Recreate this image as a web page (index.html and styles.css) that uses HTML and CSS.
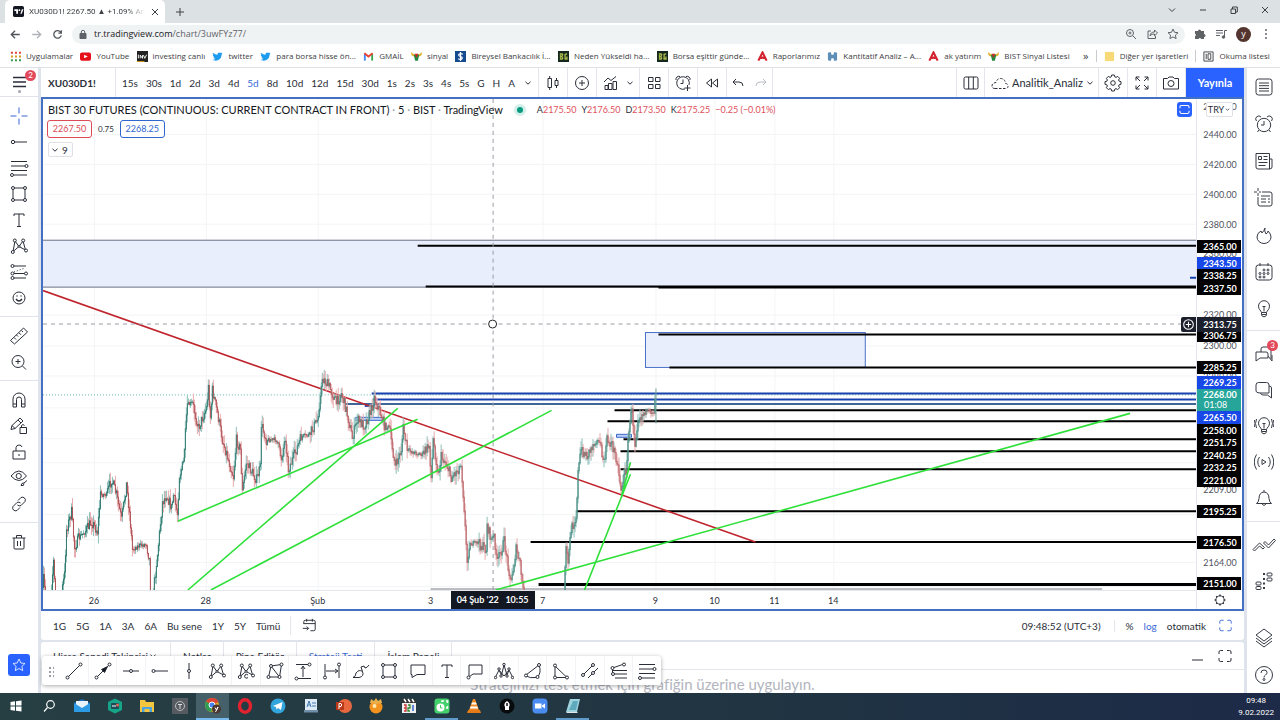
FILE: index.html
```html
<!DOCTYPE html>
<html lang="tr">
<head>
<meta charset="utf-8">
<title>XU030D1! 2267.50 ▲ +1.09%</title>
<link rel="stylesheet" href="styles.css">
</head>
<body>
<svg class="sprite" aria-hidden="true">
  <symbol id="back" viewBox="0 0 20 20"><path d="M15 10H5M9.500 5.500L5 10l4.500 4.500"/></symbol>
  <symbol id="fwd" viewBox="0 0 20 20"><path d="M5 10h10M10.500 5.500L15 10l-4.500 4.500"/></symbol>
  <symbol id="reload" viewBox="0 0 20 20"><path d="M14 7.500A4.500 4.500 0 1 0 14.500 11M14.500 5v3.500H11"/></symbol>
  <symbol id="chev" viewBox="0 0 10 10"><path d="M2.500 3.800L5 6.200l2.500-2.400"/></symbol>
  <symbol id="bird" viewBox="0 0 12 12"><path d="M1 2c1.500 1.500 3 2 5 2.200C6 1.500 8.500 1 9.700 2.200L11.300 2 10.500 4C10.300 8 7.500 10.500 4 10.500 2.700 10.500 1.500 10 .7 9.500 2 9.500 3 9 3.700 8.500 2.300 8.200 1.800 7.500 1.700 6.800L2.500 6.700C1.200 6 .9 5 1 4.200l.7.200C.7 3.500.7 2.700 1 2z" fill="#1d9bf0" stroke="none"/></symbol>
  <symbol id="bull" viewBox="0 0 12 12"><g stroke="none"><path d="M0 1l3 2.500h6L12 1l-.5 3.500L9 6H3L.5 4.500z" fill="#e0b12c"/><path d="M3 4h6L7.500 10.500h-3z" fill="#1f8a3d"/><path d="M4 3h4L6.500 7h-1z" fill="#c22f2f"/></g></symbol>
  <symbol id="bg" viewBox="0 0 12 12"><g stroke="none"><path d="M0 0h12v12H0z" fill="#14281d"/><path d="M2 2.500h3l1 1.500-1 2 1 2-1 1.500H2zM7 3l3-.5v1.700H8.500v3.500H9V6h1.500v3.500H7z" fill="#a9b84a"/><path d="M3 4h1.300v1H3zM3 7h1.300v1H3z" fill="#14281d"/></g></symbol>
  <symbol id="aLogo" viewBox="0 0 12 12"><path d="M1.500 10.500L6 1.500l4.500 9M3.500 8Q6 6.300 8.500 8" stroke="#d3222d" stroke-width="2.300"/></symbol>
  <symbol id="pattern" viewBox="0 0 20 20"><path d="M4 15.500L6 5l4 5.500L14 5l2.500 9M4 15.500l6-5 6.500 3.500"/><g fill="#fff"><circle cx="3.800" cy="16" r="1.500"/><circle cx="5.800" cy="4.500" r="1.500"/><circle cx="14.200" cy="4.500" r="1.500"/><circle cx="17" cy="14.500" r="1.500"/><circle cx="10" cy="10.300" r="1"/></g></symbol>
  <symbol id="rect" viewBox="0 0 20 20"><path d="M4 4h12v12H4z"/><g fill="#fff"><circle cx="4" cy="4" r="1.500"/><circle cx="16" cy="4" r="1.500"/><circle cx="4" cy="16" r="1.500"/><circle cx="16" cy="16" r="1.500"/></g></symbol>
  <symbol id="text" viewBox="0 0 20 20"><path d="M5 6V4h10v2M10 4v12.500M8 16.500h4"/></symbol>
  <symbol id="frame" viewBox="0 0 20 20"><path d="M4 8V6q0-1.500 1.500-1.500H8M12 4.500h2.500Q16 4.500 16 6v2M16 12v2q0 1.500-1.500 1.500H12M8 15.500H5.500Q4 15.500 4 14v-2"/></symbol>
  <symbol id="gear" viewBox="0 0 20 20"><path d="M8.700 3h2.600l.5 1.900 1.200.5 1.700-1 1.900 1.900-1 1.700.5 1.200 1.900.5v2.600l-1.900.5-.5 1.200 1 1.700-1.900 1.900-1.700-1-1.200.5-.5 1.900H8.700l-.5-1.900-1.200-.5-1.700 1-1.900-1.900 1-1.700-.5-1.200-1.900-.5V9.700l1.900-.5.5-1.200-1-1.700 1.900-1.900 1.700 1 1.200-.5z" transform="translate(0 -1)"/><circle cx="10" cy="10" r="2.300"/></symbol>
  <symbol id="bulb" viewBox="0 0 20 20"><path d="M7.500 13.500C7 11.500 4.500 10.500 4.500 7.200a5.500 5.500 0 0 1 11 0c0 3.300-2.500 4.300-3 6.300zM7.500 13.500v2.300q.5 2 2.500 2t2.500-2v-2.300M8 15.500h4M8.500 7.500h3M10 7.500v5"/></symbol>
  <symbol id="alarm" viewBox="0 0 20 20"><circle cx="10" cy="11" r="6.700"/><path d="M10 7v4H7M2.500 7A3 3 0 0 1 7 3M17.500 7A3 3 0 0 0 13 3M5 16l-1.500 2M15 16l1.500 2"/></symbol>
</svg>

<header class="browser">
  <div class="tabstrip">
    <div class="tab">
      <svg class="fav" viewBox="0 0 12 12"><rect width="12" height="12" rx="2" fill="#131722"/><path d="M1.500 3.500h4v5h-2v-3h-2zM8 8.500l1.700-5h1.800l-2 5z" fill="#fff"/><circle cx="7" cy="4.500" r="1" fill="#fff"/></svg>
      <span class="tab-title">XU030D1! 2267.50 ▲ +1.09% An</span>
      <button class="x" aria-label="Sekmeyi kapat"><svg viewBox="0 0 10 10"><path d="M2 2l6 6M8 2L2 8"/></svg></button>
    </div>
    <button class="newtab" aria-label="Yeni sekme"><svg viewBox="0 0 10 10"><path d="M5 1v8M1 5h8"/></svg></button>
    <div class="win">
      <button aria-label="Sekme ara"><svg viewBox="0 0 10 10"><path d="M2 3.500l3 3 3-3"/></svg></button>
      <button aria-label="Küçült"><svg viewBox="0 0 10 10"><path d="M2 5h6"/></svg></button>
      <button aria-label="Önceki boyut"><svg viewBox="0 0 10 10"><path d="M2 4h4.500v4.500H2zM3.500 4V2h4.800v5H6.500"/></svg></button>
      <button aria-label="Kapat"><svg viewBox="0 0 10 10"><path d="M2 2l6 6M8 2L2 8"/></svg></button>
    </div>
  </div>
  <div class="navbar">
    <button aria-label="Geri"><svg><use href="#back"/></svg></button>
    <button class="dim" aria-label="İleri"><svg><use href="#fwd"/></svg></button>
    <button aria-label="Yenile"><svg><use href="#reload"/></svg></button>
    <div class="omni">
      <svg class="lock" viewBox="0 0 10 10"><path d="M2 4.500h6v5H2z" fill="#5f6368"/><path d="M3.300 4.500V3a1.700 1.700 0 0 1 3.400 0v1.500"/></svg>
      <span class="url"><b>tr.tradingview.com</b><span>/chart/3uwFYz77/</span></span>
      <svg viewBox="0 0 12 12"><circle cx="5" cy="5" r="3.500"/><path d="M7.700 7.700L11 11M3.500 5h3M5 3.500v3"/></svg>
      <svg viewBox="0 0 12 12"><path d="M5 3H2v7.500h7.500V8M4 8c.3-3 2-4 4.500-4V2l3 3-3 2.800V6C6.500 6 5 6.500 4 8z"/></svg>
      <svg viewBox="0 0 12 12"><path d="M6 1l1.500 3.300 3.500.4-2.600 2.400.7 3.500L6 8.900l-3.100 1.700.7-3.500L1 4.700l3.500-.4z"/></svg>
    </div>
    <div class="navend">
      <svg viewBox="0 0 12 12"><path d="M1 3h3a1.500 1.500 0 1 1 3 0h3v3a1.500 1.500 0 1 1 0 3v2H7.200a1.400 1.400 0 0 0-2.600 0H1V8.300a1.400 1.400 0 0 0 0-2.600z" fill="#5f6368" stroke="none"/></svg>
      <svg viewBox="0 0 12 12"><path d="M1 2.500h7M1 5h7M1 7.500h4M9.500 9V2.500H12"/><circle cx="8.500" cy="9" r="1.300" fill="#5f6368"/></svg>
      <span class="avatar">y</span>
      <svg viewBox="0 0 12 12"><path d="M6 2v.1M6 6v.1M6 10v.1" stroke-width="2" stroke-linecap="round"/></svg>
    </div>
  </div>
  <nav class="bookmarks">
    <a href="#"><svg viewBox="0 0 12 12"><g stroke-width="2.200" stroke-dasharray="2.200 2.200"><path d="M1 2h11" stroke="#e04a3a"/><path d="M1 6h11" stroke="#d19b20"/><path d="M1 10h11" stroke="#3a9a55"/></g></svg>Uygulamalar</a>
    <a href="#"><svg viewBox="0 0 12 12"><rect y="1.500" width="12" height="9" rx="2" fill="#e60f18" stroke="none"/><path d="M4.500 4l4 2-4 2z" fill="#fff" stroke="none"/></svg>YouTube</a>
    <a href="#"><svg viewBox="0 0 12 12"><path d="M0 0h12v12H0z" fill="#222" stroke="none"/><path d="M1.500 4v4M3.500 8V4.500L6 8V4.500M7 4.500L8.500 8 10.500 4" stroke="#fff"/><path d="M0 11.500h8" stroke="#e9a11b"/></svg>investing canlı</a>
    <a href="#"><svg><use href="#bird"/></svg>twitter</a>
    <a href="#"><svg><use href="#bird"/></svg>para borsa hisse ön...</a>
    <a href="#"><svg viewBox="0 0 12 12"><g stroke-width="2"><path d="M2 10.500V3" stroke="#4285f4"/><path d="M10 10.500V3" stroke="#34a853"/><path d="M1.500 2.500L6 6l4.500-3.500" stroke="#ea4335"/></g></svg>GMAİL</a>
    <a href="#"><svg><use href="#bull"/></svg>sinyal</a>
    <a href="#"><svg viewBox="0 0 12 12"><path d="M0 0h12v12H0z" fill="#174b8f" stroke="none"/><path d="M8.500 3.500Q6 2 4.500 3.500T6 6t1.500 2.500T3.500 8.500M6 1v10" stroke="#fff" stroke-width="1.300"/></svg>Bireysel Bankacılık İ...</a>
    <a href="#"><svg><use href="#bg"/></svg>Neden Yükseldi ha...</a>
    <a href="#"><svg><use href="#bg"/></svg>Borsa eşittir günde...</a>
    <a href="#"><svg><use href="#aLogo"/></svg>Raporlarımız</a>
    <a href="#"><svg viewBox="0 0 12 12"><path d="M1 2l3-1 1 3h2l1-3 3 1v8l-3 1-1-3H5l-1 3-3-1z" fill="#5e8fb8" stroke="none"/></svg>Kantitatif Analiz – A...</a>
    <a href="#"><svg><use href="#aLogo"/></svg>ak yatırım</a>
    <a href="#"><svg><use href="#bull"/></svg>BIST Sinyal Listesi</a>
    <span class="more">»</span>
    <a class="split" href="#"><svg viewBox="0 0 12 12"><path d="M1 1h10v10H1z" fill="#f7d978" stroke="none"/></svg>Diğer yer işaretleri</a>
    <a class="split" href="#"><svg viewBox="0 0 12 12"><path d="M1 1h10v10H1zM3.500 3v6M5.500 3h3v6h-3z"/></svg>Okuma listesi</a>
  </nav>
</header>

<main class="app">
  <aside class="left">
    <button class="menu" aria-label="Menü"><svg viewBox="0 0 20 20"><path d="M4 5.500h13M4 10h13M4 14.500h13" stroke-width="1.600"/></svg><i class="badge">2</i><i class="dot"></i></button>
    <div class="tools">
      <button class="blue" aria-label="İmleç"><svg viewBox="0 0 20 20"><path d="M10 1.500v6M10 12.500v6M1.500 10h6M12.500 10h6"/></svg></button>
      <button aria-label="Yatay ışın"><svg viewBox="0 0 20 20"><circle cx="4" cy="10" r="1.700"/><path d="M5.700 10H18"/></svg></button>
      <button aria-label="Fibonacci"><svg viewBox="0 0 20 20"><path d="M2 3.500h16M2 8h14M2 12.500h16M5 17h13"/><circle cx="17.500" cy="8" r="1.500"/><circle cx="3" cy="17" r="1.500"/></svg></button>
      <button aria-label="Dikdörtgen"><svg><use href="#rect"/></svg></button>
      <button aria-label="Metin"><svg><use href="#text"/></svg></button>
      <button aria-label="Formasyon"><svg><use href="#pattern"/></svg></button>
      <button aria-label="Tahmin"><svg viewBox="0 0 20 20"><path d="M4 4h13M4 11.500h13M4 16h13"/><path d="M5 10l11-4" stroke-dasharray="1 2"/><g fill="#fff"><circle cx="3.500" cy="4" r="1.500"/><circle cx="3.500" cy="11.500" r="1.500"/><circle cx="3.500" cy="16" r="1.500"/><circle cx="17" cy="11.500" r="1.500"/></g></svg></button>
      <button aria-label="Simge"><svg viewBox="0 0 20 20"><circle cx="10" cy="10" r="6"/><path d="M7 11q3 4 6 0M8 7.500v1M12 7.500v1" stroke-width="1.400"/></svg></button>
    </div>
    <div class="tools">
      <button aria-label="Ölçüm"><svg viewBox="0 0 20 20"><path d="M1.500 14.500l13-12.500 4 4-13 12zM5 11.500l2 2M7.500 9l1.500 1.500M10 6.800l2 2M12.500 4.500L14 6"/></svg></button>
      <button aria-label="Yakınlaştır"><svg viewBox="0 0 20 20"><circle cx="9" cy="9.500" r="6"/><path d="M13.500 14l3.500 3.500M6.500 9.500h5M9 7v5"/></svg></button>
    </div>
    <div class="tools">
      <button aria-label="Mıknatıs"><svg viewBox="0 0 20 20"><path d="M4 17V9a6 6 0 0 1 12 0v8h-3.500V9.500a2.500 2.500 0 0 0-5 0V17zM4 14h3.500M12.500 14H16"/></svg></button>
      <button aria-label="Çizim modu"><svg viewBox="0 0 20 20"><path d="M2 13.500l1-4L11 2l3 3-8 7.500zM3 9.500l3 3M9 4l3 3M11 11.500h6.500v6H11zM12.500 11.500v-2q1.500-2 3 0"/></svg></button>
      <button aria-label="Kilitle"><svg viewBox="0 0 20 20"><path d="M4 9h12v8H4zM7 9V5.500q.5-2.500 3-2.500t3 2M10 12v2"/></svg></button>
      <button aria-label="Gizle"><svg viewBox="0 0 20 20"><path d="M2 8q8-10 15.500 0Q10 17 2 8zM12 17.500q.5-3 3-2.500l3-2.500M12 17.500q3 1 3-2"/><circle cx="9.700" cy="8" r="2.600"/></svg></button>
      <button aria-label="Bağla"><svg viewBox="0 0 20 20"><path d="M9 6.500l3-3q2-1 3.500.5t.5 3.500l-4 4q-2 1-3.500-.5M11 13.500l-3 3q-2 1-3.500-.5T4 12.500l4-4q2-1 3.500.5"/></svg></button>
    </div>
    <div class="tools last">
      <button aria-label="Sil"><svg viewBox="0 0 20 20"><path d="M3.500 6h13M7.500 6V3.500h5V6M5 6v10q0 1 1 1h8q1 0 1-1V6M8.500 9v5M11.500 9v5"/></svg></button>
    </div>
    <button class="fav-btn" aria-label="Favoriler"><svg viewBox="0 0 20 20"><path d="M10 2.500l2.300 5 5.200.6-3.900 3.600 1.100 5.300-4.700-2.600L5.300 17l1.100-5.300L2.500 8.100l5.200-.6z"/></svg></button>
  </aside>

  <section class="center">
    <div class="topbar">
      <button class="symbol">XU030D1!</button>
      <div class="intervals">
        <button>15s</button><button>30s</button><button>1d</button><button>2d</button><button>3d</button><button>4d</button><button class="on">5d</button><button>8d</button><button>10d</button><button>12d</button><button>15d</button><button>30d</button><button>1s</button><button>2s</button><button>3s</button><button>4s</button><button>5s</button><button>G</button><button>H</button><button>A</button><button aria-label="Diğer"><svg class="sm"><use href="#chev"/></svg></button>
      </div>
      <button class="cell" aria-label="Mumlar"><svg viewBox="0 0 20 20"><path d="M5 5.500h3.500v9H5zM6.700 3v2.500M6.700 14.500V17M12 7.500h3v5h-3zM13.500 5v2.500M13.500 12.500V15"/></svg></button>
      <button class="cell" aria-label="Karşılaştır"><svg viewBox="0 0 20 20"><circle cx="10" cy="10" r="6.500"/><path d="M10 7v6M7 10h6"/></svg></button>
      <button class="cell wide" aria-label="Göstergeler"><svg viewBox="0 0 20 20"><path d="M4 16.500v-4h3v4zM7.500 16.500v-6h3.500v6zM12 16.500v-8h3.500v8zM3 9l4-4 3 2.500L15 3.500"/></svg><svg class="sm"><use href="#chev"/></svg></button>
      <button class="cell" aria-label="Şablonlar"><svg viewBox="0 0 20 20"><path d="M4.500 4.500H9v4H4.500zM11.500 4.500H16v4h-4.500zM4.500 11.500H9v4H4.500zM11.500 11.500H16v4h-4.500z"/></svg></button>
      <button class="cell" aria-label="Alarm"><svg viewBox="0 0 20 20"><path d="M12 16A6.300 6.300 0 1 1 16 12M10 6.500v4H7.500M3 7A3 3 0 0 1 7 3.500M17 7A3 3 0 0 0 13 3.500M14.500 12v6M11.500 15h6"/></svg></button>
      <button class="cell" aria-label="Tekrar"><svg viewBox="0 0 20 20"><path d="M9.500 6v8L4.500 10zM15.500 6v8l-5-4z"/></svg></button>
      <div class="cell undo"><button aria-label="Geri al"><svg viewBox="0 0 20 20"><path d="M8 6L5 9l3 3M5 9h6q4 0 4 4"/></svg></button><button class="dim" aria-label="Yinele"><svg viewBox="0 0 20 20"><path d="M12 6l3 3-3 3M15 9H9q-4 0-4 4"/></svg></button></div>
      <button class="cell push" aria-label="Yerleşim"><svg viewBox="0 0 20 20"><rect x="3" y="4" width="14" height="12" rx="1.500"/><path d="M7.700 4v12M12.300 4v12"/></svg></button>
      <button class="cell layout"><svg viewBox="0 0 20 20"><path d="M5 15.500h11q2.500-.5 2-3-.5-2-2.500-2-.5-5-5-5-3.500 0-4.500 4-4 .5-4 3.500 0 2.500 3 2.500" stroke-dasharray="2.500 1.500"/></svg><span>Analitik_Analiz</span><svg class="sm"><use href="#chev"/></svg></button>
      <button class="cell" aria-label="Ayarlar"><svg><use href="#gear"/></svg></button>
      <button class="cell" aria-label="Tam ekran"><svg viewBox="0 0 20 20"><path d="M4 7.500V4h3.500M4 4l4 4M16 7.500V4h-3.500M16 4l-4 4M4 12.500V16h3.500M4 16l4-4M16 12.500V16h-3.500M16 16l-4-4"/></svg></button>
      <button class="cell" aria-label="Görüntü al"><svg viewBox="0 0 20 20"><path d="M2.500 5.500h4L8 4h4l1.500 1.500h4v10.500h-15z"/><circle cx="10" cy="10.500" r="3"/></svg></button>
      <button class="publish">Yayınla</button>
    </div>

    <div class="chart">
      <div class="plot">
        <svg class="canvas" viewBox="43 99 1154 492" preserveAspectRatio="none">
          <g id="grid"></g>
          <rect x="42" y="240.500" width="1156" height="47" fill="#e8eefc" stroke="#6a7188"/>
          <rect x="646" y="333" width="220" height="35" fill="#e8eefc" stroke="#4a72c8"/>
          <path d="M43 395.500h1154" stroke="#5fb5ad" stroke-dasharray="1 2"/>
          <g stroke="#1742ad" stroke-width="2"><path d="M372 394h825M373 400h824M1191 278h6"/><path d="M346 404.500h851" stroke="#3f6699"/><path d="M365 406.500h10" /></g>
          <path d="M356 418h27v3h-27zM617 435h15v3h-15z" fill="#bdd0f5" stroke="#3c66cc"/>
          <g id="lines"></g>
          <path d="M431 590h672" stroke="#777b85"/>
          <path d="M43 291L756 543" stroke="#c0252d" stroke-width="1.600"/>
          <g id="candles"></g>
          <path d="M178 522L418 420M188 591L398 409M211 591L552 411M496 591L1131 414M585 591L631 475M622 497l9-34" stroke="#2fe03a" stroke-width="1.600"/>
          <path d="M493.500 99v492M43 324.500h1146" stroke="#9a9da6" stroke-dasharray="4 4"/>
          <circle cx="493" cy="324.500" r="4" fill="#fff" stroke="#222"/>
        </svg>
        <div class="legend">
          <div class="row"><h1>BIST 30 FUTURES (CONTINUOUS: CURRENT CONTRACT IN FRONT) <s>·</s> 5 <s>·</s> BIST <s>·</s> TradingView</h1><i class="live"></i>
            <span class="ohlc">A<b>2175.50</b></span><span class="ohlc">Y<b>2176.50</b></span><span class="ohlc">D<b>2173.50</b></span><span class="ohlc">K<b>2175.25</b></span><span class="ohlc"><b>−0.25 (−0.01%)</b></span></div>
          <div class="row second"><button class="bid">2267.50</button><span class="spread">0.75</span><button class="ask">2268.25</button></div>
          <button class="count"><svg class="sm"><use href="#chev"/></svg>9</button>
        </div>
        <button class="maxi" aria-label="Büyüt"><svg viewBox="0 0 20 20"><path d="M3 8V6q0-2 2-2h10q2 0 2 2v2M3 12v2q0 2 2 2h10q2 0 2-2v-2" stroke-width="1.600"/></svg></button>
        <span class="plus" id="plus"><svg viewBox="0 0 14 14"><circle cx="7" cy="7" r="4.500"/><path d="M7 4.500v5M4.500 7h5"/></svg></span>
      </div>
      <div class="prices" id="prices"><button class="cur">TRY<svg class="sm"><use href="#chev"/></svg></button></div>
      <div class="times" id="times"></div>
      <button class="axis-gear" aria-label="Eksen ayarları"><svg viewBox="0 0 20 20"><circle cx="10" cy="10" r="4.500"/><path d="M10 4v1.500M10 14.500V16M4 10h1.500M14.500 10H16M5.800 5.800l1 1M13.200 13.200l1 1M14.200 5.800l-1 1M6.800 13.200l-1 1" stroke-width="1.600"/></svg></button>
    </div>

    <div class="ranges">
      <button>1G</button><button>5G</button><button>1A</button><button>3A</button><button>6A</button><button>Bu sene</button><button>1Y</button><button>5Y</button><button>Tümü</button>
      <button class="goto" aria-label="Tarihe git"><svg viewBox="0 0 20 20"><path d="M4 8.500V6q0-1.500 1.500-1.500h9Q16 4.500 16 6v8q0 1.500-1.500 1.500H11M4 8h12M7 3v3M13 3v3M3 13h6M7 11l2 2-2 2"/></svg></button>
      <button class="clock">09:48:52 (UTC+3)</button>
      <button class="pct">%</button><button class="on">log</button><button>otomatik</button>
      <button class="on" aria-label="Tam ekran"><svg><use href="#frame"/></svg></button>
    </div>

    <div class="panel">
      <div class="ptabs">
        <button>Hisse Senedi Takipçisi <svg class="sm"><use href="#chev"/></svg></button><button>Notlar</button><button>Pine Editör</button><button class="on">Strateji Testi</button><button>İşlem Paneli</button>
        <div class="pend"><svg viewBox="0 0 20 20"><path d="M4 14h11"/></svg><svg><use href="#frame"/></svg></div>
      </div>
      <p class="hint">Stratejinizi test etmek için grafiğin üzerine uygulayın.</p>
      <div class="floating">
        <span class="grip"></span>
        <button aria-label="Trend çizgisi"><svg viewBox="0 0 20 20"><path d="M4 16L16 4"/><g fill="#fff"><circle cx="3.500" cy="16.500" r="1.500"/><circle cx="16.500" cy="3.500" r="1.500"/></g></svg></button>
        <button aria-label="Ok"><svg viewBox="0 0 20 20"><path d="M4 16L16 4"/><path d="M8.500 8.500L14.500 5.500l-3 6z" fill="#131722"/><g fill="#fff"><circle cx="3.500" cy="16.500" r="1.500"/><circle cx="16.500" cy="3.500" r="1.500"/></g></svg></button>
        <button aria-label="Yatay çizgi"><svg viewBox="0 0 20 20"><path d="M2 10h6.500M11.500 10H18"/><circle cx="10" cy="10" r="1.500"/></svg></button>
        <button aria-label="Yatay ışın"><svg viewBox="0 0 20 20"><path d="M5 10h13"/><circle cx="3.500" cy="10" r="1.500"/></svg></button>
        <button aria-label="Dikey çizgi"><svg viewBox="0 0 20 20"><path d="M10 2v6.500M10 11.500V18"/><circle cx="10" cy="10" r="1.500"/></svg></button>
        <button aria-label="XABCD"><svg><use href="#pattern"/></svg></button>
        <button aria-label="Cypher"><svg viewBox="0 0 20 20"><use href="#pattern"/><path d="M8 12.500h5v6H8z" fill="#fff" stroke="none"/><path d="M12 14q-2-1.500-3 0-1 2 .5 3 1.500.5 2.500-.5"/></svg></button>
        <button aria-label="ABCD"><svg viewBox="0 0 20 20"><path d="M3.500 16l2.500-11 10.500-1.500-2 12.500zM6 5l8.500 11"/><g fill="#fff"><circle cx="3.500" cy="16" r="1.500"/><circle cx="6" cy="5" r="1.500"/><circle cx="16.500" cy="3.500" r="1.500"/><circle cx="14.500" cy="16" r="1.500"/></g></svg></button>
        <button aria-label="Fiyat aralığı"><svg viewBox="0 0 20 20"><path d="M3 3.500h12M5 17.500h13M10 16V6M8 8l2-3 2 3"/><g fill="#fff"><circle cx="16.500" cy="3.500" r="1.500"/><circle cx="3.500" cy="17.500" r="1.500"/></g></svg></button>
        <button aria-label="Tarih aralığı"><svg viewBox="0 0 20 20"><path d="M3 3v12M17 5v12M4 10h11M13 8l3 2-3 2"/><g fill="#fff"><circle cx="3" cy="16.500" r="1.500"/><circle cx="17" cy="3.500" r="1.500"/></g></svg></button>
        <button aria-label="Fırça"><svg viewBox="0 0 20 20"><path d="M2 16.500q3-1 3-4.500 3-4 6.500-1.500 2 5-3.500 6zM11.500 10.500L10 6l3-1 1 2q2 0 4-3"/></svg></button>
        <button aria-label="Dikdörtgen"><svg><use href="#rect"/></svg></button>
        <button aria-label="Balon"><svg viewBox="0 0 20 20"><path d="M3 4h14v9.500H9l-5 3v-3H3z"/></svg></button>
        <button aria-label="Metin"><svg><use href="#text"/></svg></button>
        <button aria-label="Not"><svg viewBox="0 0 20 20"><path d="M4 15V4h13v9H8l-4 3"/><circle cx="3.500" cy="16.500" r="1.500" fill="#fff"/></svg></button>
        <button aria-label="Elliott"><svg viewBox="0 0 20 20"><path d="M1.500 16L5 9l2.500 5L10 4l3 10 2-5 3.500 7M5 9l5 6 5-6"/><g fill="#fff"><circle cx="1.500" cy="16.500" r="1.200"/><circle cx="5" cy="8" r="1.200"/><circle cx="7" cy="15" r="1.200"/><circle cx="10" cy="3.500" r="1.200"/><circle cx="13" cy="15" r="1.200"/><circle cx="15" cy="8" r="1.200"/><circle cx="18.500" cy="16.500" r="1.200"/></g></svg></button>
        <button aria-label="Yay"><svg viewBox="0 0 20 20"><path d="M3 14L16 4q3 8-2 12.500-7 1-11-1.500"/><g fill="#fff"><circle cx="3" cy="14.500" r="1.500"/><circle cx="16" cy="4" r="1.500"/><circle cx="14.500" cy="16" r="1.500"/></g></svg></button>
        <button aria-label="Üçgen"><svg viewBox="0 0 20 20"><path d="M4 5v11.500h12z"/><g fill="#fff"><circle cx="4" cy="4.500" r="1.500"/><circle cx="4" cy="16.500" r="1.500"/><circle cx="16" cy="16.500" r="1.500"/></g></svg></button>
        <button aria-label="Kanal"><svg viewBox="0 0 20 20"><path d="M3 14L13 4M8 17l10-10"/><g fill="#fff"><circle cx="3" cy="14" r="1.500"/><circle cx="13" cy="4" r="1.500"/><circle cx="13" cy="12" r="1.500"/></g></svg></button>
        <button aria-label="Fib uzatma"><svg viewBox="0 0 20 20"><path d="M3.500 7L15 3M3.500 8v4M3.500 9.500H18M3.500 13H18M6 17h12"/><g fill="#fff"><circle cx="3.500" cy="7" r="1.500"/><circle cx="15" cy="3.500" r="1.500"/><circle cx="4" cy="13" r="1.500"/></g></svg></button>
        <button aria-label="Fib düzeltme"><svg viewBox="0 0 20 20"><path d="M2 3.500h16M2 8h14M2 12.500h16M5 17h13"/><g fill="#fff"><circle cx="17.500" cy="8" r="1.500"/><circle cx="3" cy="17" r="1.500"/></g></svg></button>
      </div>
    </div>
  </section>

  <aside class="right">
    <div class="rgroup seven">
      <button aria-label="İzleme listesi"><svg viewBox="0 0 20 20"><rect x="2" y="2" width="16" height="16" rx="2.500"/><path d="M5 6h10M5 8.700h10M5 11.400h10M5 14h10"/></svg></button>
      <button aria-label="Alarmlar"><svg><use href="#alarm"/></svg></button>
      <button aria-label="Haberler"><svg viewBox="0 0 20 20"><path d="M2 2.500h13.500V18H4q-2 0-2-2zM15.500 8H18v8q0 2-2.500 2M4.500 5.500h3v3h-3zM9.500 5.500h4M9.500 8.500h4M4.500 11.500h9M4.500 14.500h7"/></svg></button>
      <button aria-label="Veri"><svg viewBox="0 0 20 20"><path d="M8 4h8q2 0 2 2v10q0 2-2 2H6q-2 0-2-2V9M4 0v3M4 5v3M0 4h3M5 4h2M7 8h9M7 11h5M7 14h5M14 11h2M14 14h2"/></svg></button>
      <button aria-label="Popüler"><svg viewBox="0 0 20 20"><path d="M11 3q-1 3 1 6 2-1 2-3 3 3 3 6a7 6.500 0 0 1-14 0q0-4 4-6l1 2q2-2 3-5z"/></svg></button>
      <button aria-label="Takvim"><svg viewBox="0 0 20 20"><rect x="2" y="3" width="16" height="15" rx="2.500"/><path d="M6 1v3M14 1v3"/><g><circle cx="10" cy="8" r="1"/><circle cx="14" cy="8" r="1"/><circle cx="6" cy="11.500" r="1"/><circle cx="10" cy="11.500" r="1"/><circle cx="14" cy="11.500" r="1"/><circle cx="6" cy="15" r="1"/><circle cx="10" cy="15" r="1"/></g></svg></button>
      <button aria-label="Fikirler"><svg><use href="#bulb"/></svg></button>
    </div>
    <div class="rgroup five">
      <button aria-label="Sohbetler"><svg viewBox="0 0 20 20"><path d="M2 8h10q2 0 2 2v4H6l-4 3zM7 8V5q0-2 2-2h6q2 0 2 2v10M14 12l4 5v-6"/></svg><i class="badge">3</i></button>
      <button aria-label="Özel sohbet"><svg viewBox="0 0 20 20"><path d="M2 5q0-2.500 2.500-2.500h8Q15 2.500 15 5v8H6q-4 0-4-2zM15 6q2.500 0 2.500 2v10l-4-3H9q-2 0-2.500-2"/></svg></button>
      <button aria-label="Fikir akışı"><svg viewBox="0 0 20 20"><use href="#bulb"/><path d="M2.500 3q-2 4.500 0 9M17.500 3q2 4.500 0 9M.5 4q-1 3.500 0 7M19.500 4q1 3.500 0 7"/></svg></button>
      <button aria-label="Yayınlar"><svg viewBox="0 0 20 20"><path d="M8 7.500v5l4-2.500zM5.500 5q-3.500 5 0 10M14.500 5q3.500 5 0 10M2.500 2.500q-4.500 7.500 0 15M17.500 2.500q4.500 7.500 0 15"/></svg></button>
      <button aria-label="Bildirimler"><svg viewBox="0 0 20 20"><path d="M2.500 15.500q2-1 2.500-5Q5 4.500 10 4q5 .5 5 6.500.5 4 2.500 5zM10 2v2M8 16q2 3 4 0"/></svg></button>
    </div>
    <div class="rgroup two">
      <button aria-label="Emir paneli"><svg class="orders" viewBox="0 0 24 20"><path d="M1 14.500L7.500 8l5 4.500-1.500 1.500L7.500 11 2.500 16zM11.500 8L13 6.500l3.500 3.500L22 4l1.500 1.500L16.500 13z"/></svg></button>
      <button aria-label="DOM"><svg viewBox="0 0 20 20"><rect x="13" y="2" width="5" height="3" rx="1"/><rect x="13" y="7" width="5" height="3" rx="1"/><rect x="2" y="11" width="5" height="3" rx="1"/><rect x="2" y="15.500" width="5" height="3" rx="1"/><path d="M9 3h2M9 8h2M9 12.500h2M9 17h2" stroke-width="2"/></svg></button>
    </div>
    <div class="rgroup foot">
      <button aria-label="Nesne ağacı"><svg viewBox="0 0 20 20"><path d="M10 1l8 6-8 6-8-6zM2 10l8 6 8-6M2 13l8 6 8-6"/></svg></button>
      <button aria-label="Yardım"><svg viewBox="0 0 20 20"><circle cx="10" cy="10" r="8.500"/><path d="M7 8q0-3 3-3t3 2.500q0 1.500-1.500 2.500-1.500.7-1.500 2.500"/><circle cx="10" cy="14.500" r="1"/></svg></button>
    </div>
  </aside>
</main>

<footer class="taskbar">
  <div class="apps">
    <button aria-label="Başlat"><svg viewBox="0 0 16 16"><path d="M2.500 4L7 3.300v4.200H2.500zM8 3.200l5.500-.8v5.100H8zM2.500 8.500H7v4.200L2.500 12zM8 8.500h5.500v5.100L8 12.800z" fill="#fff"/></svg></button>
    <button aria-label="Ara"><svg viewBox="0 0 16 16"><circle cx="9.500" cy="6.500" r="3.800" stroke="#fff" stroke-width="1.200"/><path d="M6.500 9.500L3 13.500" stroke="#fff" stroke-width="1.200"/></svg></button>
    <button aria-label="Posta"><svg viewBox="0 0 16 16"><path d="M0 5l8-4 8 4v9H0z" fill="#1b6fc0"/><path d="M2 3h12v7H2z" fill="#e9f3fb"/><path d="M0 5l8 5 8-5v9H0z" fill="#2e9be6"/></svg></button>
    <button aria-label="Güvenlik"><svg viewBox="0 0 16 16"><path d="M8 .5L15 4v8l-7 3.500L1 12V4z" fill="#17a589"/><rect x="4" y="5" width="8" height="6" rx="1" fill="#1d4d58"/><path d="M5 8h4" stroke="#fff"/><circle cx="10.500" cy="7" r="1.500" fill="#d65"/></svg></button>
    <button aria-label="Dosyalar"><svg viewBox="0 0 16 16"><path d="M1 2h5l1 2h8v10H1z" fill="#f3c63f"/><path d="M3 9h10v5h-2.500v-3h-5v3H3z" fill="#4aa3df"/></svg></button>
    <button aria-label="T"><svg viewBox="0 0 16 16"><path d="M0 0h16v16H0z" fill="#555b60"/><circle cx="8" cy="8" r="4.500" stroke="#bbb"/><path d="M6 6.500h4M8 6.500V11" stroke="#ddd"/></svg></button>
    <button class="open" aria-label="Chrome"><svg viewBox="0 0 16 16"><circle cx="7" cy="7" r="7" fill="#e2a91f"/><path d="M7 7L1 3.500A7 7 0 0 1 13.500 4z" fill="#dc4437"/><path d="M7 7L1 3.500A7 7 0 0 0 6.500 14z" fill="#2e9e56"/><circle cx="7" cy="7" r="3" fill="#4285f4" stroke="#fff"/><circle cx="11.500" cy="11" r="4.500" fill="#4b3832"/><path d="M10 9.500l1.500 2.500 1.500-3-2.500 5" stroke="#fff"/></svg></button>
    <button aria-label="Opera"><svg viewBox="0 0 16 16"><ellipse cx="8" cy="8" rx="5.500" ry="6.300" stroke="#e32230" stroke-width="3.400"/></svg></button>
    <button aria-label="Telegram"><svg viewBox="0 0 16 16"><circle cx="8" cy="8" r="7.500" fill="#33a5dd"/><path d="M3 8l9.500-4L11 12 8 10l-1.500 1.500L6 9z" fill="#fff"/></svg></button>
    <button aria-label="Belge"><svg viewBox="0 0 16 16"><path d="M2 1h12v11H2z" fill="#dceaf5"/><path d="M1 12h14v2.500H1z" fill="#728fa9"/><path d="M4 9l2-6 2 6M5 7h2M9 5h4M9 8h4" stroke="#4179b4"/></svg></button>
    <button aria-label="PowerPoint"><svg viewBox="0 0 16 16"><circle cx="9" cy="8" r="7" fill="#e9683f"/><path d="M0 4h8v8H0z" fill="#b93818"/><path d="M3 11V5.500h2q1.500 1.500 0 3H3" stroke="#fff"/></svg></button>
    <button aria-label="Ekran kaydı"><svg viewBox="0 0 16 16"><circle cx="8" cy="9" r="6.500" fill="#f2931f"/><path d="M2 5l1-4 3 2 2-3 2 3 3-2 1 4-6 1z" fill="#e9b04a"/><circle cx="6.500" cy="8" r="2" fill="#ffe8b0"/></svg></button>
    <button aria-label="321"><svg viewBox="0 0 16 16"><path d="M1 5h14v10H1z" fill="#eee"/><path d="M1 1l14 1v3H1z" fill="#333"/><path d="M3 1l2 3M7 1l2 3M11 1l2 3" stroke="#fff" stroke-width="1.500"/><path d="M3 7h2v6H3M3 10h2" stroke="#c33" stroke-width="1.300"/><path d="M7 7h2v3H7v3h2" stroke="#383" stroke-width="1.300"/><path d="M12 7v6" stroke="#36c" stroke-width="1.500"/></svg></button>
    <button class="run" aria-label="Kayıt"><svg viewBox="0 0 16 16"><rect x=".5" y=".5" width="15" height="15" rx="3" fill="#44d06b"/><circle cx="6.500" cy="9.500" r="4" fill="#fff"/><path d="M6.500 7v3h2" stroke="#44d06b"/><path d="M8 4V3h2M12 3h1.500v2M13.500 8v2H12" stroke="#fff" stroke-width="1.500"/></svg></button>
    <button aria-label="VLC"><svg viewBox="0 0 16 16"><path d="M7 1h2l4 11H3z" fill="#f08a24"/><path d="M6 4.500h4l.7 2H5.300zM4.600 8.500h6.800l.7 2H3.900z" fill="#fff"/><path d="M2 12h12l1 3H1z" fill="#e57a18"/></svg></button>
    <button aria-label="Kalem"><svg viewBox="0 0 16 16"><circle cx="8" cy="8" r="7.500" fill="#080b0e"/><path d="M8 3q4 2.500 2 6v3H6V9Q4 5.500 8 3z" fill="#fff"/><path d="M8 5v3" stroke="#080b0e" stroke-width="1.500"/></svg></button>
    <button aria-label="Zoom"><svg viewBox="0 0 16 16"><rect x=".5" y=".5" width="15" height="15" rx="4" fill="#4a8cf0"/><path d="M3 5.500h6.500v5H3zM10 7.500l3-2v5l-3-2z" fill="#fff"/></svg></button>
    <button class="run" aria-label="Not Defteri"><svg viewBox="0 0 16 16"><path d="M5 1h10l-3 13H1z" fill="#9fd4de"/><path d="M8 3h5l-2 9H4z" fill="#5fa9bd"/><path d="M1 14l11 0 1 1H2z" fill="#dfe9ec"/></svg></button>
  </div>
  <div class="date"><span>09:48</span><span>9.02.2022</span></div>
</footer>
<script src="chart.js"></script>
</body>
</html>
```

FILE: styles.css
```css
* { box-sizing: border-box; }
html, body { height: 100%; margin: 0; }
body { display: flex; flex-direction: column; overflow: hidden; background: #fff; color: #2a2e39; font-family: Lato, "Open Sans", sans-serif; font-size: 10px; line-height: 12px; }
button { display: flex; align-items: center; justify-content: center; margin: 0; padding: 0; border: 0; background: none; color: inherit; font: inherit; white-space: nowrap; }
svg { display: block; flex: none; fill: none; stroke: currentColor; stroke-width: 1; width: 20px; height: 20px; }
svg.sm { width: 10px; height: 10px; }
i, s { font-style: normal; text-decoration: none; }
.sprite { position: absolute; width: 0; height: 0; }
.on, .blue { color: #3a69d6; }
.dim { color: #b9bcc4; }

.browser { font-family: "Open Sans", "Noto Sans", sans-serif; color: #3c4043; }
.tabstrip { display: flex; align-items: center; height: 23px; background: #dce1e4; }
.tab { display: flex; align-items: center; align-self: stretch; width: 160px; margin-left: 5px; padding: 0 6px 0 8px; gap: 5px; border-radius: 5px 5px 0 0; background: #fff; }
.tab svg { width: 10px; height: 10px; }
.tab .fav { width: 11px; height: 11px; stroke: none; }
.tab-title { flex: 1; white-space: nowrap; font-family: Roboto, sans-serif; font-size: 8px; mask-image: linear-gradient(90deg, #000 85%, transparent); }
.newtab { margin-left: 10px; }
.newtab svg, .win svg { width: 10px; height: 10px; }
.win { display: flex; gap: 21px; margin: 0 10px 4px auto; }
.navbar { display: flex; align-items: center; height: 22px; padding: 0 8px 0 5px; background: #fff; }
.navbar > button { width: 21px; color: #50545a; }
.navbar > button svg { width: 17px; height: 17px; stroke-width: 1.5; }
.navbar > .dim { color: #b0b3b8; }
.omni { display: flex; flex: 1; align-items: center; height: 19px; margin: 0 9px 0 4px; padding: 0 6px; gap: 9px; border-radius: 10px; background: #f0f3f4; color: #5f6368; }
.omni svg { width: 12px; height: 12px; }
.omni .lock { width: 10px; height: 10px; margin-right: -3px; }
.url { flex: 1; font-size: 9px; }
.url b { font-weight: 400; color: #202124; }
.navend { display: flex; align-items: center; gap: 9px; color: #5f6368; }
.navend svg { width: 12px; height: 12px; }
.avatar { width: 15px; height: 15px; border-radius: 50%; background: #53342e; color: #fff; font-size: 9px; line-height: 14px; text-align: center; }
.bookmarks { display: flex; align-items: center; justify-content: space-between; height: 23px; padding: 0 10px; border-bottom: 1px solid #dfe1e5; background: #fff; font-size: 8px; }
.bookmarks a { display: flex; align-items: center; gap: 5px; color: inherit; text-decoration: none; white-space: nowrap; }
.bookmarks svg { width: 11px; height: 11px; }
.more { padding-left: 6px; font-size: 11px; }
.bookmarks .split { border-left: 1px solid #c8cbd0; padding-left: 7px; }

.app { display: flex; flex: 1; min-height: 0; background: #dfe3ec; }
.left { display: flex; flex-direction: column; width: 38px; background: #fff; }
.menu { position: relative; height: 29px; border-bottom: 1px solid #e0e3eb; }
.badge { position: absolute; top: 2px; right: 2px; width: 11px; height: 11px; border-radius: 50%; background: #e2495b; color: #fff; font-size: 8px; line-height: 11px; text-align: center; }
.dot { position: absolute; bottom: 3px; width: 3px; height: 3px; border-radius: 50%; background: #a3a6af; }
.tools { display: grid; grid-auto-rows: 26px; padding: 6px 0 5px; border-bottom: 1px solid #e0e3eb; }
.tools.last { border: 0; }
.fav-btn { width: 22px; height: 22px; margin: auto 8px 17px; border-radius: 3px; background: #2962ff; color: #fff; }
.fav-btn svg { width: 16px; height: 16px; }

.center { display: flex; flex: 1; flex-direction: column; min-width: 0; margin: 0 3px; }
.topbar { display: flex; height: 29px; background: #fff; }
.topbar > * { border-right: 1px solid #e4e6ec; }
.symbol { width: 75px; padding-left: 7px; justify-content: flex-start; font-weight: 700; font-size: 10px; }
.intervals { display: flex; justify-content: space-between; width: 423px; padding: 0 5px 0 6px; }
.cell { width: 29px; }
.wide { width: 43px; gap: 4px; }
.undo { display: flex; width: 46px; justify-content: space-around; }
.push { margin-left: auto; border-left: 1px solid #e4e6ec; }
.layout { width: 114px; gap: 2px; padding: 0 3px 0 5px; font-size: 11px; }
.layout span { flex: 1; }
.publish { width: 58px; border: 0; background: #2962ff; color: #fff; font-size: 11px; font-weight: 700; }

.chart { display: grid; flex: 1; grid-template: minmax(0, 1fr) 19px / minmax(0, 1fr) 46px; min-height: 0; border: 2px solid #4470c4; background: #fff; }
.plot { position: relative; }
.canvas { position: absolute; width: 100%; height: 100%; }
.legend { position: relative; display: flex; flex-direction: column; align-items: flex-start; padding: 3px 5px; }
.row { display: flex; align-items: center; gap: 5px; }
h1 { margin: 0; font-size: 11px; line-height: 15px; font-weight: 400; color: #131722; }
h1 s { color: #9598a1; }
.live { width: 12px; height: 12px; margin: 0 6px; border: 3px solid #d3efea; border-radius: 50%; background: #089981; }
.ohlc { font-size: 9px; }
.ohlc b { font-weight: 400; color: #e0505c; }
.second { gap: 6px; margin: 3px 0 4px -1px; }
.bid, .ask { width: 45px; height: 18px; border: 1px solid; border-radius: 3px; background: #fff; font-size: 9px; }
.bid { color: #dc4b56; }
.ask { color: #2f67cf; }
.spread { font-size: 8px; }
.count { height: 15px; padding: 0 4px 0 1px; gap: 2px; border: 1px solid #dfe1e7; border-radius: 2px; background: #fff; }
.maxi { position: absolute; top: 3px; right: 4px; width: 15px; height: 15px; border-radius: 3px; background: #2962ff; color: #fff; }
.maxi svg { width: 13px; height: 13px; }
.plus { position: absolute; right: 0; width: 15px; height: 15px; margin-top: -7px; border-radius: 2px 0 0 2px; background: #1c202c; color: #fff; }
.plus svg { width: 15px; height: 15px; }
.prices { position: relative; border-left: 1px solid #e4e6ec; font-size: 9px; }
.price { position: absolute; left: 0; width: 44px; height: 13px; margin-top: -6px; padding-left: 2px; line-height: 13px; text-align: center; color: #50535e; }
.price.black, .price.mark { background: #000; color: #fff; font-weight: 700; }
.price.navy { background: #1848e8; color: #fff; font-weight: 700; }
.price.mark { height: 15px; margin-top: -7px; line-height: 15px; background: #1c202c; }
.price.teal { height: 23px; margin-top: -11px; padding-top: 1px; line-height: 10px; background: #26a69a; color: #fff; font-weight: 700; }
.price small { display: block; padding-left: 5px; text-align: left; font-size: 9px; font-weight: 400; }
.cur { position: absolute; z-index: 1; top: 3px; left: 9px; width: 27px; height: 15px; border: 1px solid #dfe1e7; border-radius: 2px; background: #fff; }
.cur svg { width: 7px; height: 7px; }
.times { position: relative; border-top: 1px solid #e4e6ec; font-size: 9px; }
.time { position: absolute; top: 4px; transform: translateX(-50%); }
.time.mark { top: 0; padding: 3px 6px; background: #131722; color: #fff; font-weight: 700; white-space: pre; }
.axis-gear { border-left: 1px solid #e4e6ec; }
.axis-gear svg { width: 18px; height: 18px; }

.ranges { display: flex; align-items: center; height: 29px; padding: 0 9px 0 12px; gap: 10px; border-radius: 0 0 3px 3px; background: #fff; }
.goto { padding-left: 9px; border-left: 1px solid #e4e6ec; }
.clock { margin-left: auto; }
.pct { margin-left: 3px; padding-left: 11px; border-left: 1px solid #e4e6ec; }
.ranges svg { width: 19px; height: 19px; }

.panel { position: relative; height: 51px; margin-top: 2px; border-radius: 3px 3px 0 0; background: #fff; }
.ptabs { display: flex; height: 28px; border-bottom: 1px solid #e4e6ec; }
.ptabs > button { padding: 0 12px; border-right: 1px solid #e4e6ec; }
.pend { display: flex; align-items: center; gap: 7px; margin: 0 9px 0 auto; }
.hint { margin: 6px 0 0; text-align: center; font-size: 15px; line-height: 17px; color: #b2b5be; }
.floating { position: absolute; top: 14px; left: 1px; display: flex; width: 619px; height: 29px; border-radius: 3px; background: #fff; box-shadow: 0 1px 4px #0005; }
.grip { width: 6px; height: 11px; margin: 10px 6px 0; background: radial-gradient(#9a9da6 35%, transparent 40%) 0 0 / 4px 4px; }
.floating button { flex: 1; border-right: 1px solid #f2f3f6; }
.floating button:last-child { border: 0; }

.right { display: flex; flex-direction: column; width: 33px; background: #fff; color: #363a45; }
.rgroup { display: grid; border-bottom: 1px solid #e0e3eb; }
.rgroup button { position: relative; height: 36px; }
.rgroup .badge { right: 2px; top: 4px; }
.seven { padding-bottom: 3px; }
.seven button, .foot button { height: 37px; }
.five { padding: 5px 0; }
.two { padding-top: 5px; border: 0; }
.orders { width: 24px; }
.foot { margin-top: auto; border: 0; }

.taskbar { display: flex; justify-content: space-between; height: 27px; background: linear-gradient(90deg, #263f43, #203442 60%, #1d2a48); color: #fff; font-family: "Open Sans", sans-serif; }
.apps { display: flex; width: 46%; }
.apps button { flex: 1; border-bottom: 2px solid transparent; }
.apps svg { width: 16px; height: 16px; stroke: none; }
.apps .open { border-color: #76b9ed; background: #46606a; }
.apps .run { border-color: #5f9ccc; }
.date { display: flex; flex-direction: column; align-items: center; padding: 2px 6px; font-family: Roboto, sans-serif; font-size: 8px; }
```

FILE: chart.js
```js
const NS = 'http://www.w3.org/2000/svg';
const BOX = { x: 43, y: 99, w: 1154, h: 492 };
const path = (parent, d, stroke, width = 1) => {
  const p = document.createElementNS(NS, 'path');
  p.setAttribute('d', d);
  p.setAttribute('stroke', stroke);
  p.setAttribute('stroke-width', width);
  document.getElementById(parent).append(p);
};

const days = [[94, '26'], [206, '28'], [318, 'Şub'], [431, '3'], [543, '7'], [656, '9'], [715, '10'], [775, '11'], [834, '14']];
const rows = [134, 164, 194, 224, 254, 284, 315, 346, 376, 408, 439, 463, 489, 515, 540, 563, 587];
path('grid', days.map(d => `M${d[0]}.5 99v492`).join('') + rows.map(y => `M43 ${y}.5h1154`).join(''), '#f3f4f6');

const levels = [[418, 246], [659, 335], [670, 368], [615, 411], [608, 422], [624, 440], [621, 452], [621, 470], [577, 512], [531, 543]];
path('lines', levels.map(([x, y]) => `M${x} ${y}H1197`).join('') + 'M426 287H1197M659 288H1197', '#000', 2);
path('lines', 'M539 585.5H1197', '#000', 3);

const legs = [
  [[43, 588], [44, 580], [46, 600], [51, 600], [54, 562], [56, 600], [61, 600], [65, 575], [67, 530], [72, 512], [75, 548], [80, 537], [85, 533], [92, 522], [98, 532], [101, 495], [107, 495], [112, 480], [117, 495], [122, 520], [127, 485], [130, 513], [133, 550], [140, 546], [147, 545], [150, 560], [151, 600], [153, 600], [158, 555], [163, 503], [167, 495], [172, 508], [174, 496], [178, 514], [180, 476], [184, 463], [188, 405], [193, 403], [199, 428], [207, 408], [209, 388], [211, 417], [213, 390], [218, 413], [223, 440], [234, 477], [237, 440], [241, 450], [243, 492], [247, 463], [257, 480], [261, 468], [262, 425], [267, 440], [277, 440], [282, 458], [286, 438], [289, 470], [297, 450], [302, 437], [310, 435], [318, 420], [322, 390], [323, 378], [330, 387], [337, 403], [342, 394], [347, 410], [353, 438], [358, 420], [365, 426], [372, 410], [375, 398], [380, 410], [386, 428], [390, 427], [396, 467], [402, 450], [404, 428], [408, 450], [415, 453], [423, 455], [430, 446], [432, 478], [434, 440], [439, 475], [442, 457], [447, 463], [452, 478], [460, 468], [462, 465], [465, 508], [467, 547], [468, 562], [470, 545], [478, 543], [487, 550], [488, 526], [492, 540], [495, 536], [498, 563], [505, 542], [512, 583], [517, 550], [521, 565], [525, 600]],
  [[565, 592], [567, 550], [569, 563], [572, 530], [577, 517], [579, 473], [582, 450], [588, 456], [595, 443], [600, 441], [605, 464], [608, 440], [613, 445], [618, 460], [622, 489], [627, 470], [631, 420], [633, 412], [636, 443], [639, 418], [645, 413], [655, 412], [656, 400]]
];
let seed = 7;
const rnd = () => (seed = (seed * 16807) % 2147483647) / 2147483647;
let up = '', down = '', upWick = '', downWick = '';
for (const leg of legs) {
  let prev = leg[0][1];
  for (let i = 1; i < leg.length; i++) {
    const [x0, y0] = leg[i - 1], [x1, y1] = leg[i];
    const calm = Math.abs(y1 - y0) < 5 ? 0.4 : 1;
    for (let x = x0; x < x1; x++) {
      const y = y0 + (y1 - y0) * (x + 1 - x0) / (x1 - x0) + (rnd() - 0.5) * 10 * calm;
      const top = Math.min(prev, y), bottom = Math.max(prev, y) + 1;
      const body = `M${x}.5 ${top.toFixed(1)}V${bottom.toFixed(1)}`;
      const wick = `M${x}.5 ${(top - rnd() * 9 * calm).toFixed(1)}V${(bottom + rnd() * 9 * calm).toFixed(1)}`;
      if (y < prev) { up += body; upWick += wick; } else { down += body; downWick += wick; }
      prev = y;
    }
  }
}
path('candles', upWick, '#8fc0b9');
path('candles', downWick, '#e8abae');
path('candles', up, '#2f7a70');
path('candles', down, '#ad5256');
path('candles', 'M656.5 389V424', '#6f9f99');

const prices = [
  [106, '2460.00'], [134, '2440.00'], [164, '2420.00'], [194, '2400.00'], [224, '2380.00'], [253, '2360.00'], [314, '2320.00'], [346, '2300.00'], [377, '2280.00'], [490, '2209.00'], [563, '2164.00'],
  [246, '2365.00', 'black'], [263, '2343.50', 'navy'], [275, '2338.25', 'black'], [288, '2337.50', 'black'], [335, '2306.75', 'black'], [324, '2313.75', 'mark'], [368, '2285.25', 'black'], [383, '2269.25', 'navy'], [401, '2268.00', 'teal'], [418, '2265.50', 'navy'], [431, '2258.00', 'black'], [443, '2251.75', 'black'], [456, '2240.25', 'black'], [468, '2232.25', 'black'], [481, '2221.00', 'black'], [512, '2195.25', 'black'], [543, '2176.50', 'black'], [584, '2151.00', 'black']
];
for (const [y, label, kind = ''] of prices) {
  const el = document.createElement('span');
  el.className = `price ${kind}`;
  el.style.top = `${(y - BOX.y) / BOX.h * 100}%`;
  el.textContent = label;
  if (kind === 'teal') {
    const left = document.createElement('small');
    left.textContent = '01:08';
    el.append(left);
  }
  document.getElementById('prices').append(el);
}
document.getElementById('plus').style.top = `${(324 - BOX.y) / BOX.h * 100}%`;
for (const [x, label, kind = ''] of [...days, [493, "04 Şub '22   10:55", 'mark']]) {
  const el = document.createElement('span');
  el.className = `time ${kind}`;
  el.style.left = `${(x - BOX.x) / BOX.w * 100}%`;
  el.textContent = label;
  document.getElementById('times').append(el);
}
```
